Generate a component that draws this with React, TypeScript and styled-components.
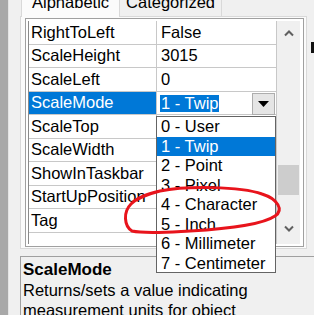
import React from "react";
import styled, { createGlobalStyle } from "styled-components";

const Global = createGlobalStyle`
  html, body { margin: 0; padding: 0; width: 314px; height: 315px; overflow: hidden; background: #f0f0f0; }
  body { font-family: "Liberation Sans", Arial, sans-serif; font-size: 16.5px; color: #000; }
  * { box-sizing: border-box; }
`;

const Window = styled.div`
  position: relative;
  display: flex;
  width: 314px;
  height: 315px;
  overflow: hidden;
`;

const SideStrip = styled.div`
  flex: none;
  width: 9px;
  background: #a8a8a8;
  border-right: 1px solid #e4e4e4;
`;

const Main = styled.div`
  flex: 1;
  min-width: 0;
  display: flex;
  flex-direction: column;
`;

const TabStrip = styled.div`
  display: flex;
  align-items: flex-start;
  height: 24px;
  margin-top: -8px;
  padding-left: 12px;
`;

const Tab = styled.div<{ $active?: boolean }>`
  position: relative;
  z-index: ${(p) => (p.$active ? 2 : 1)};
  height: ${(p) => (p.$active ? 25 : 24)}px;
  line-height: 18px;
  padding: 0 ${(p) => (p.$active ? 10 : 6)}px;
  background: ${(p) => (p.$active ? "#fbfbfb" : "#f0f0f0")};
  border: 1px solid #d9d9d9;
  border-bottom: none;
  border-left: ${(p) => (p.$active ? "1px solid #d9d9d9" : "none")};
  white-space: nowrap;
`;

const TabPage = styled.div`
  margin: 0 7px 0 11px;
  height: 233px;
  padding: 1px 2px 1px 4px;
  background: #fbfbfb;
  border: 1px solid #d9d9d9;
`;

const Grid = styled.div`
  display: flex;
  height: 229px;
  padding: 2px;
  background: #fff;
  border: 1px solid #a0a0a0;
`;

const Table = styled.div`
  position: relative;
  width: 249px;
  flex: none;
  background: #fff;
  border-left: 1px solid #8a8a8a;
  border-right: 1px solid #c8c8c8;
`;

const Row = styled.div`
  display: flex;
  height: 23.5px;
  border-bottom: 1px solid #c8c8c8;
`;

const NameCell = styled.div<{ $selected?: boolean }>`
  flex: none;
  width: 128px;
  display: flex;
  align-items: center;
  padding-left: 2px;
  border-right: 1px solid #c8c8c8;
  background: ${(p) => (p.$selected ? "#0078d7" : "transparent")};
  color: ${(p) => (p.$selected ? "#fff" : "#000")};
  white-space: nowrap;
  overflow: hidden;
`;

const ValueCell = styled.div`
  flex: 1;
  display: flex;
  align-items: center;
  padding-left: 4px;
  white-space: nowrap;
  overflow: hidden;
`;

const ComboCell = styled.div`
  flex: 1;
  display: flex;
  align-items: center;
  padding: 1px 1px 0 3px;
`;

const ComboText = styled.span`
  line-height: 17px;
  padding: 0 1px;
  background: #0078d7;
  color: #fff;
  white-space: nowrap;
`;

const ComboButton = styled.div`
  margin-left: auto;
  width: 23px;
  height: 22px;
  align-self: flex-start;
  display: flex;
  align-items: center;
  justify-content: center;
  background: #e5e5e5;
  border: 1px solid #adadad;
`;

const DropList = styled.div`
  position: absolute;
  z-index: 10;
  left: 127px;
  top: 95px;
  width: 120px;
  height: 157px;
  background: #fff;
  border: 1px solid #646464;
`;

const DropItem = styled.div<{ $selected?: boolean }>`
  height: 19.5px;
  line-height: 19.5px;
  padding-left: 4px;
  white-space: nowrap;
  background: ${(p) => (p.$selected ? "#0078d7" : "transparent")};
  color: ${(p) => (p.$selected ? "#fff" : "#000")};
`;

const ScrollBar = styled.div`
  flex: none;
  width: 23px;
  display: flex;
  flex-direction: column;
  background: #f0f0f0;
`;

const ScrollButton = styled.div<{ $down?: boolean }>`
  flex: none;
  height: 24px;
  margin-bottom: ${(p) => (p.$down ? 4 : 0)}px;
  display: flex;
  align-items: center;
  justify-content: center;
`;

const Track = styled.div`
  flex: 1;
  padding: 120px 1px 0 1px;
`;

const Thumb = styled.div`
  height: 30px;
  background: #cdcdcd;
`;

const Description = styled.div`
  margin: 7px -10px 0 11px;
  flex: 1;
  padding: 3px 2px;
  line-height: 20px;
  background: #f0f0f0;
  border-top: 1px solid #a0a0a0;
  border-left: 1px solid #a0a0a0;
`;

const DescTitle = styled.div`
  font-weight: bold;
  font-size: 17px;
`;

const DescText = styled.div`
  white-space: nowrap;
`;

const EdgeMark = styled.div`
  position: absolute;
  right: 0;
  top: 42px;
  width: 3px;
  height: 11px;
  background: #111;
`;

const Annotation = styled.svg`
  position: absolute;
  left: 0;
  top: 0;
  z-index: 20;
  pointer-events: none;
`;

const rows: [string, string][] = [
  ["RightToLeft", "False"],
  ["ScaleHeight", "3015"],
  ["ScaleLeft", "0"],
  ["ScaleMode", ""],
  ["ScaleTop", ""],
  ["ScaleWidth", ""],
  ["ShowInTaskbar", ""],
  ["StartUpPosition", ""],
  ["Tag", ""],
];

const options = [
  "0 - User",
  "1 - Twip",
  "2 - Point",
  "3 - Pixel",
  "4 - Character",
  "5 - Inch",
  "6 - Millimeter",
  "7 - Centimeter",
];

const Chevron = ({ down }: { down?: boolean }) => (
  <svg width="10" height="7" viewBox="0 0 10 7">
    <polyline
      points={down ? "1,1.5 5,5.5 9,1.5" : "1,5.5 5,1.5 9,5.5"}
      fill="none"
      stroke="#606060"
      strokeWidth="2"
    />
  </svg>
);

export default function App() {
  return (
    <>
      <Global />
      <Window>
        <SideStrip />
        <Main>
          <TabStrip>
            <Tab $active>Alphabetic</Tab>
            <Tab>Categorized</Tab>
          </TabStrip>
          <TabPage>
            <Grid>
              <Table>
                {rows.map(([name, value]) =>
                  name === "ScaleMode" ? (
                    <Row key={name}>
                      <NameCell $selected>{name}</NameCell>
                      <ComboCell>
                        <ComboText>1 - Twip</ComboText>
                        <ComboButton>
                          <svg width="11" height="6" viewBox="0 0 11 6">
                            <polygon points="0,0 11,0 5.5,6" fill="#000" />
                          </svg>
                        </ComboButton>
                      </ComboCell>
                    </Row>
                  ) : (
                    <Row key={name}>
                      <NameCell>{name}</NameCell>
                      <ValueCell>{value}</ValueCell>
                    </Row>
                  )
                )}
                <DropList>
                  {options.map((o) => (
                    <DropItem key={o} $selected={o === "1 - Twip"}>
                      {o}
                    </DropItem>
                  ))}
                </DropList>
              </Table>
              <ScrollBar>
                <ScrollButton>
                  <Chevron />
                </ScrollButton>
                <Track>
                  <Thumb />
                </Track>
                <ScrollButton $down>
                  <Chevron down />
                </ScrollButton>
              </ScrollBar>
            </Grid>
          </TabPage>
          <Description>
            <DescTitle>ScaleMode</DescTitle>
            <DescText>Returns/sets a value indicating</DescText>
            <DescText>measurement units for object</DescText>
          </Description>
        </Main>
        <EdgeMark />
        <Annotation width="314" height="315" viewBox="0 0 314 315">
          <path
            d="M 160 191 C 185 186, 240 186, 262 194 C 278 199, 284 210, 275 216 C 262 225, 225 229, 190 231 C 170 232, 145 234, 132 231 C 124 226, 123 212, 131 204 C 138 197, 148 194, 160 191"
            fill="none"
            stroke="#e8141c"
            strokeWidth="3"
            strokeLinecap="round"
          />
        </Annotation>
      </Window>
    </>
  );
}
